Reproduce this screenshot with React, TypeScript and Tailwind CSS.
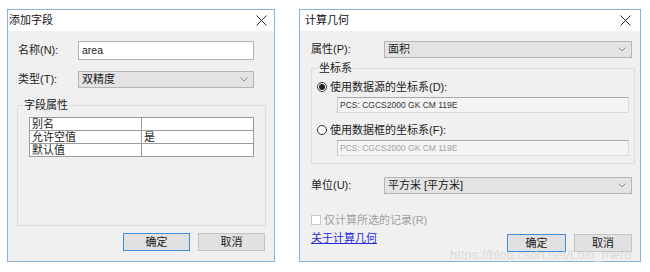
import React from 'react';

const font = "font-['Liberation_Sans','Noto_Sans_CJK_SC',sans-serif]";

const CloseIcon = () => (
  <svg width="11" height="11" viewBox="0 0 11 11" className="shrink-0">
    <path d="M0.5 0.5 L10.5 10.5 M10.5 0.5 L0.5 10.5" stroke="#2b2b2b" strokeWidth="1" fill="none" />
  </svg>
);

const Chevron = () => (
  <svg width="8" height="5" viewBox="0 0 8 5" className="shrink-0">
    <path d="M0.5 0.5 L4 4 L7.5 0.5" stroke="#8a8a8a" strokeWidth="1" fill="none" />
  </svg>
);

const Select = ({ value, width }: { value: string; width: string }) => (
  <div className={`flex h-[17px] items-center justify-between border border-[#b5b5b5] bg-[#e3e3e3] pl-[3px] pr-[5px] ${width}`}>
    <span className="text-[11px] leading-none text-[#1a1a1a]">{value}</span>
    <Chevron />
  </div>
);

const Button = ({ label, primary, width }: { label: string; primary?: boolean; width: string }) => (
  <button
    className={`flex h-[18px] items-center justify-center bg-[#e1e1e1] text-[11px] leading-none text-[#1a1a1a] ${width} ${
      primary ? 'border border-[#3c8fd8]' : 'border border-[#c4c4c4]'
    }`}
  >
    {label}
  </button>
);

const Radio = ({ checked }: { checked?: boolean }) => (
  <span className="flex h-[10px] w-[10px] shrink-0 items-center justify-center rounded-full border border-[#333] bg-white">
    {checked && <span className="h-[6px] w-[6px] rounded-full bg-[#222]" />}
  </span>
);

const ReadOnlyBox = ({ value, disabled }: { value: string; disabled?: boolean }) => (
  <div className="ml-[20px] mt-[3px] flex h-[16px] w-[292px] items-center border border-[#dadada] border-t-[#a9a9a9] border-l-[#c8c8c8] bg-[#f4f4f4] pl-[2px]">
    <span className={`text-[8.5px] leading-none ${disabled ? 'text-[#a3a3a3]' : 'text-[#333]'}`}>{value}</span>
  </div>
);

const AddField = () => (
  <div className="flex h-[253px] w-[268px] flex-col border border-[#86b4de] bg-[#f0f0f0]">
    <div className="flex h-[21px] items-center justify-between bg-white pl-[1px] pr-[7px]">
      <span className="text-[11px] leading-none text-[#111]">添加字段</span>
      <CloseIcon />
    </div>

    <div className="flex flex-1 flex-col pl-[9px] pr-[9px]">
      <div className="mt-[10px] flex items-center">
        <span className="w-[61px] pl-[1px] text-[11px] text-[#222]">名称(N):</span>
        <div className="flex h-[19px] w-[176px] items-center border border-[#b4b4b4] bg-white pl-[3px]">
          <span className="text-[10.5px] leading-none text-[#222]">area</span>
        </div>
      </div>

      <div className="mt-[11px] flex items-center">
        <span className="w-[61px] pl-[1px] text-[11px] text-[#222]">类型(T):</span>
        <Select value="双精度" width="w-[176px]" />
      </div>

      <fieldset className="mt-[11px] h-[127px] w-[248px] border border-[#dcdcdc] px-[11px]">
        <legend className="ml-[-6px] px-[1px] text-[11px] leading-[13px] text-[#222]">字段属性</legend>
        <table className="mt-[5px] w-[225px] border-collapse border border-[#9a9a9a] bg-white text-[11px] leading-[12px] text-[#222]">
          <tbody>
            <tr>
              <td className="w-[112px] border border-[#9a9a9a] pl-[2px]">别名</td>
              <td className="border border-[#9a9a9a] pl-[2px]"></td>
            </tr>
            <tr>
              <td className="border border-[#9a9a9a] pl-[2px]">允许空值</td>
              <td className="border border-[#9a9a9a] pl-[2px]">是</td>
            </tr>
            <tr>
              <td className="border border-[#9a9a9a] pl-[2px]">默认值</td>
              <td className="border border-[#9a9a9a] pl-[2px]"></td>
            </tr>
          </tbody>
        </table>
      </fieldset>

      <div className="mt-[7px] flex justify-end gap-[8px]">
        <Button label="确定" primary width="w-[67px]" />
        <Button label="取消" width="w-[67px]" />
      </div>
    </div>
  </div>
);

const CalcGeometry = () => (
  <div className="flex h-[253px] w-[342px] flex-col border border-[#86b4de] bg-[#f0f0f0]">
    <div className="flex h-[21px] items-center justify-between bg-white pl-[5px] pr-[9px]">
      <span className="text-[11px] leading-none text-[#111]">计算几何</span>
      <CloseIcon />
    </div>

    <div className="flex flex-1 flex-col pl-[11px] pr-[8px]">
      <div className="mt-[10px] flex items-center">
        <span className="w-[73px] text-[11px] text-[#222]">属性(P):</span>
        <Select value="面积" width="w-[248px]" />
      </div>

      <fieldset className="mt-[4px] h-[102px] w-[322px] border border-[#dcdcdc] px-[5px]">
        <legend className="ml-[1px] px-[1px] text-[11px] leading-[13px] text-[#222]">坐标系</legend>
        <div className="mt-[5px] flex h-[14px] items-center gap-[3px]">
          <Radio checked />
          <span className="text-[11px] leading-none text-[#222]">使用数据源的坐标系(D):</span>
        </div>
        <ReadOnlyBox value="PCS: CGCS2000 GK CM 119E" />
        <div className="mt-[10px] flex h-[14px] items-center gap-[3px]">
          <Radio />
          <span className="text-[11px] leading-none text-[#222]">使用数据框的坐标系(F):</span>
        </div>
        <ReadOnlyBox value="PCS: CGCS2000 GK CM 119E" disabled />
      </fieldset>

      <div className="mt-[13px] flex items-center">
        <span className="w-[73px] text-[11px] text-[#222]">单位(U):</span>
        <Select value="平方米 [平方米]" width="w-[248px]" />
      </div>

      <div className="mt-[19px] flex h-[14px] items-center gap-[3px]">
        <span className="h-[10px] w-[10px] border border-[#c6c6c6] bg-white" />
        <span className="text-[11px] leading-none text-[#a0a0a0]">仅计算所选的记录(R)</span>
      </div>

      <div className="mt-[5px] flex items-start justify-between">
        <a href="#" className="text-[11px] leading-[13px] text-[#2a2ad6] underline">关于计算几何</a>
        <div className="mt-[2px] flex gap-[8px]">
          <Button label="确定" primary width="w-[59px]" />
          <Button label="取消" width="w-[58px]" />
        </div>
      </div>
    </div>
  </div>
);

export default function App() {
  return (
    <div className={`relative flex h-[272px] w-[650px] gap-[24px] bg-white pl-[7px] pt-[9px] ${font}`}>
      <AddField />
      <CalcGeometry />
      <span className="absolute left-[450px] top-[248px] whitespace-nowrap text-[13px] leading-[14px] text-[#d6d6d6] opacity-80">
        https://blog.csdn.net/Lolo_mero
      </span>
    </div>
  );
}
